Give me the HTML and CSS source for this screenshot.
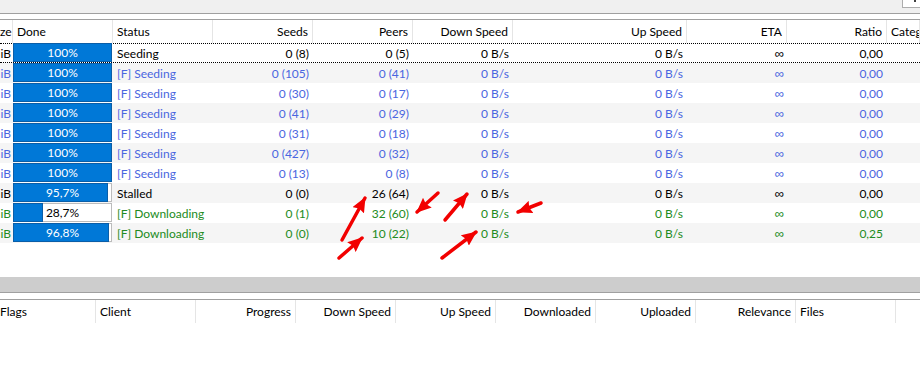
FILE: index.html
```html
<!DOCTYPE html>
<html lang="en">
<head>
  <meta charset="UTF-8">
  <title>Transfers</title>
  <link rel="stylesheet" href="styles.css">
</head>
<body>
  <div class="toolbar">
    <div class="search"><span class="search-mark"></span></div>
  </div>
  <div class="gap"></div>

  <div class="torrents">
    <div class="row head">
      <div class="c r">ze</div>
      <div class="c">Done</div>
      <div class="c">Status</div>
      <div class="c r">Seeds</div>
      <div class="c r">Peers</div>
      <div class="c r">Down Speed</div>
      <div class="c r">Up Speed</div>
      <div class="c r">ETA</div>
      <div class="c r">Ratio</div>
      <div class="c">Category</div>
    </div>

    <div class="row focus blk">
      <div class="c r">iB</div>
      <div class="c done"><div class="bar"><div class="fill" style="--p:100%"></div><span class="label">100%</span></div></div>
      <div class="c">Seeding</div>
      <div class="c r">0 (8)</div>
      <div class="c r">0 (5)</div>
      <div class="c r">0 B/s</div>
      <div class="c r">0 B/s</div>
      <div class="c r inf">∞</div>
      <div class="c r">0,00</div>
      <div class="c"></div>
    </div>
    <div class="row alt blue">
      <div class="c r">iB</div>
      <div class="c done"><div class="bar"><div class="fill" style="--p:100%"></div><span class="label">100%</span></div></div>
      <div class="c">[F] Seeding</div>
      <div class="c r">0 (105)</div>
      <div class="c r">0 (41)</div>
      <div class="c r">0 B/s</div>
      <div class="c r">0 B/s</div>
      <div class="c r inf">∞</div>
      <div class="c r">0,00</div>
      <div class="c"></div>
    </div>
    <div class="row blue">
      <div class="c r">iB</div>
      <div class="c done"><div class="bar"><div class="fill" style="--p:100%"></div><span class="label">100%</span></div></div>
      <div class="c">[F] Seeding</div>
      <div class="c r">0 (30)</div>
      <div class="c r">0 (17)</div>
      <div class="c r">0 B/s</div>
      <div class="c r">0 B/s</div>
      <div class="c r inf">∞</div>
      <div class="c r">0,00</div>
      <div class="c"></div>
    </div>
    <div class="row alt blue">
      <div class="c r">iB</div>
      <div class="c done"><div class="bar"><div class="fill" style="--p:100%"></div><span class="label">100%</span></div></div>
      <div class="c">[F] Seeding</div>
      <div class="c r">0 (41)</div>
      <div class="c r">0 (29)</div>
      <div class="c r">0 B/s</div>
      <div class="c r">0 B/s</div>
      <div class="c r inf">∞</div>
      <div class="c r">0,00</div>
      <div class="c"></div>
    </div>
    <div class="row blue">
      <div class="c r">iB</div>
      <div class="c done"><div class="bar"><div class="fill" style="--p:100%"></div><span class="label">100%</span></div></div>
      <div class="c">[F] Seeding</div>
      <div class="c r">0 (31)</div>
      <div class="c r">0 (18)</div>
      <div class="c r">0 B/s</div>
      <div class="c r">0 B/s</div>
      <div class="c r inf">∞</div>
      <div class="c r">0,00</div>
      <div class="c"></div>
    </div>
    <div class="row alt blue">
      <div class="c r">iB</div>
      <div class="c done"><div class="bar"><div class="fill" style="--p:100%"></div><span class="label">100%</span></div></div>
      <div class="c">[F] Seeding</div>
      <div class="c r">0 (427)</div>
      <div class="c r">0 (32)</div>
      <div class="c r">0 B/s</div>
      <div class="c r">0 B/s</div>
      <div class="c r inf">∞</div>
      <div class="c r">0,00</div>
      <div class="c"></div>
    </div>
    <div class="row blue">
      <div class="c r">iB</div>
      <div class="c done"><div class="bar"><div class="fill" style="--p:100%"></div><span class="label">100%</span></div></div>
      <div class="c">[F] Seeding</div>
      <div class="c r">0 (13)</div>
      <div class="c r">0 (8)</div>
      <div class="c r">0 B/s</div>
      <div class="c r">0 B/s</div>
      <div class="c r inf">∞</div>
      <div class="c r">0,00</div>
      <div class="c"></div>
    </div>
    <div class="row alt blk">
      <div class="c r">iB</div>
      <div class="c done"><div class="bar"><div class="fill" style="--p:95.7%"></div><span class="label">95,7%</span></div></div>
      <div class="c">Stalled</div>
      <div class="c r">0 (0)</div>
      <div class="c r">26 (64)</div>
      <div class="c r">0 B/s</div>
      <div class="c r">0 B/s</div>
      <div class="c r inf">∞</div>
      <div class="c r">0,00</div>
      <div class="c"></div>
    </div>
    <div class="row green">
      <div class="c r">iB</div>
      <div class="c done"><div class="bar"><div class="fill" style="--p:28.7%"></div><span class="label dark">28,7%</span></div></div>
      <div class="c">[F] Downloading</div>
      <div class="c r">0 (1)</div>
      <div class="c r">32 (60)</div>
      <div class="c r">0 B/s</div>
      <div class="c r">0 B/s</div>
      <div class="c r inf">∞</div>
      <div class="c r">0,00</div>
      <div class="c"></div>
    </div>
    <div class="row alt green">
      <div class="c r">iB</div>
      <div class="c done"><div class="bar"><div class="fill" style="--p:96.8%"></div><span class="label">96,8%</span></div></div>
      <div class="c">[F] Downloading</div>
      <div class="c r">0 (0)</div>
      <div class="c r">10 (22)</div>
      <div class="c r">0 B/s</div>
      <div class="c r">0 B/s</div>
      <div class="c r inf">∞</div>
      <div class="c r">0,25</div>
      <div class="c"></div>
    </div>
  </div>

  <div class="filler"></div>
  <div class="splitter"></div>
  <div class="gap2"></div>

  <div class="peers">
    <div class="prow head">
      <div class="c first">Flags</div>
      <div class="c">Client</div>
      <div class="c r">Progress</div>
      <div class="c r">Down Speed</div>
      <div class="c r">Up Speed</div>
      <div class="c r">Downloaded</div>
      <div class="c r">Uploaded</div>
      <div class="c r">Relevance</div>
      <div class="c">Files</div>
      <div class="c last"></div>
    </div>
  </div>

  <!-- red annotation arrows drawn on top of the screenshot -->
  <svg class="marks" width="920" height="386" viewBox="0 0 920 386">
    <defs>
      <marker id="head" viewBox="0 0 15 13" refX="14" refY="6.5" markerWidth="15" markerHeight="13" markerUnits="userSpaceOnUse" orient="auto">
        <path d="M0 0 L15 6.5 L0 13 L2 6.5 Z" fill="#f20000"/>
      </marker>
    </defs>
    <g stroke="#f20000" stroke-width="3.5" stroke-linecap="round" marker-end="url(#head)">
      <line x1="342" y1="240" x2="365" y2="198"/>
      <line x1="438" y1="193" x2="417" y2="212"/>
      <line x1="445" y1="220" x2="467" y2="194"/>
      <line x1="541" y1="203" x2="518" y2="212"/>
      <line x1="339" y1="258" x2="362" y2="238"/>
      <line x1="442" y1="258" x2="476" y2="232"/>
    </g>
  </svg>
</body>
</html>
```

FILE: styles.css
```css
body {
  margin: 0;
  width: 920px;
  height: 386px;
  overflow: hidden;
  position: relative;
  background: #fff;
  font-family: "Segoe UI", Lato, "Noto Sans", sans-serif;
  font-size: 12px;
  color: #000;
  display: flex;
  flex-direction: column;
}

.toolbar {
  height: 13px;
  background: #f0f0f0;
  border-bottom: 1px solid #a0a0a0;
  display: flex;
  justify-content: flex-end;
  flex: none;
}

.search {
  width: 17px;
  height: 7px;
  background: #fff;
  border: 1px solid #adadad;
  border-top: none;
  border-right: none;
  display: flex;
  justify-content: flex-end;
}

.search-mark {
  width: 2px;
  height: 2px;
  margin-right: 4px;
  background: #404040;
}

.gap {
  height: 5px;
  flex: none;
}

.torrents {
  border-top: 1px solid #a0a0a0;
  flex: none;
}

.row {
  display: grid;
  grid-template-columns: 13px 100px 100px 100px 100px 100px 174px 100px 100px 1fr;
  height: 20px;
  line-height: 21px;
  box-sizing: border-box;
}

.row.head {
  height: 23px;
  line-height: 24px;
  color: #000;
}

.row.head .c,
.prow.head .c {
  border-right: 1px solid #e5e5e5;
}

.c {
  padding: 0 4px;
  white-space: nowrap;
  overflow: hidden;
  box-sizing: border-box;
}

.r {
  text-align: right;
}

.inf {
  font-family: "Noto Sans", sans-serif;
  font-size: 13px;
  padding-right: 3px;
}

.row .c:first-child {
  padding: 0 2px 0 0;
}

.alt {
  background: #f5f5f5;
}

.focus {
  border-top: 1px dotted #000;
  border-bottom: 1px dotted #000;
  line-height: 19px;
}

.blk {
  color: #000;
}

.blue {
  color: #4a66e0;
}

.green {
  color: #228b22;
}

.done {
  padding: 0;
  overflow: visible;
}

.bar {
  position: relative;
  height: 19px;
  margin-right: 1px;
  border: 1px solid #bcbcbc;
  background: #fff;
  box-sizing: border-box;
  display: flex;
  align-items: center;
  justify-content: center;
}

.focus .bar {
  height: 19px;
  margin-top: -1px;
}

.fill {
  position: absolute;
  left: -1px;
  top: -1px;
  bottom: -1px;
  width: calc(var(--p) + 2px);
  background: #0078d7;
  border: 1px solid #0a5ea8;
  box-sizing: border-box;
}

.label {
  position: relative;
  color: #fff;
  line-height: 18px;
}

.label.dark {
  color: #000;
}

.filler {
  height: 34px;
  flex: none;
}

.splitter {
  height: 15px;
  background: #cdcdcd;
  border-bottom: 1px solid #a0a0a0;
  flex: none;
}

.gap2 {
  height: 6px;
  flex: none;
}

.peers {
  border-top: 1px solid #a0a0a0;
  flex: 1;
}

.prow {
  display: grid;
  grid-template-columns: 96px repeat(8, 100px) 1fr;
  height: 23px;
  line-height: 24px;
}

.prow .first {
  padding-left: 0;
}

.prow.head .last {
  border-right: none;
}

.marks {
  position: absolute;
  top: 0;
  left: 0;
  pointer-events: none;
}
```
